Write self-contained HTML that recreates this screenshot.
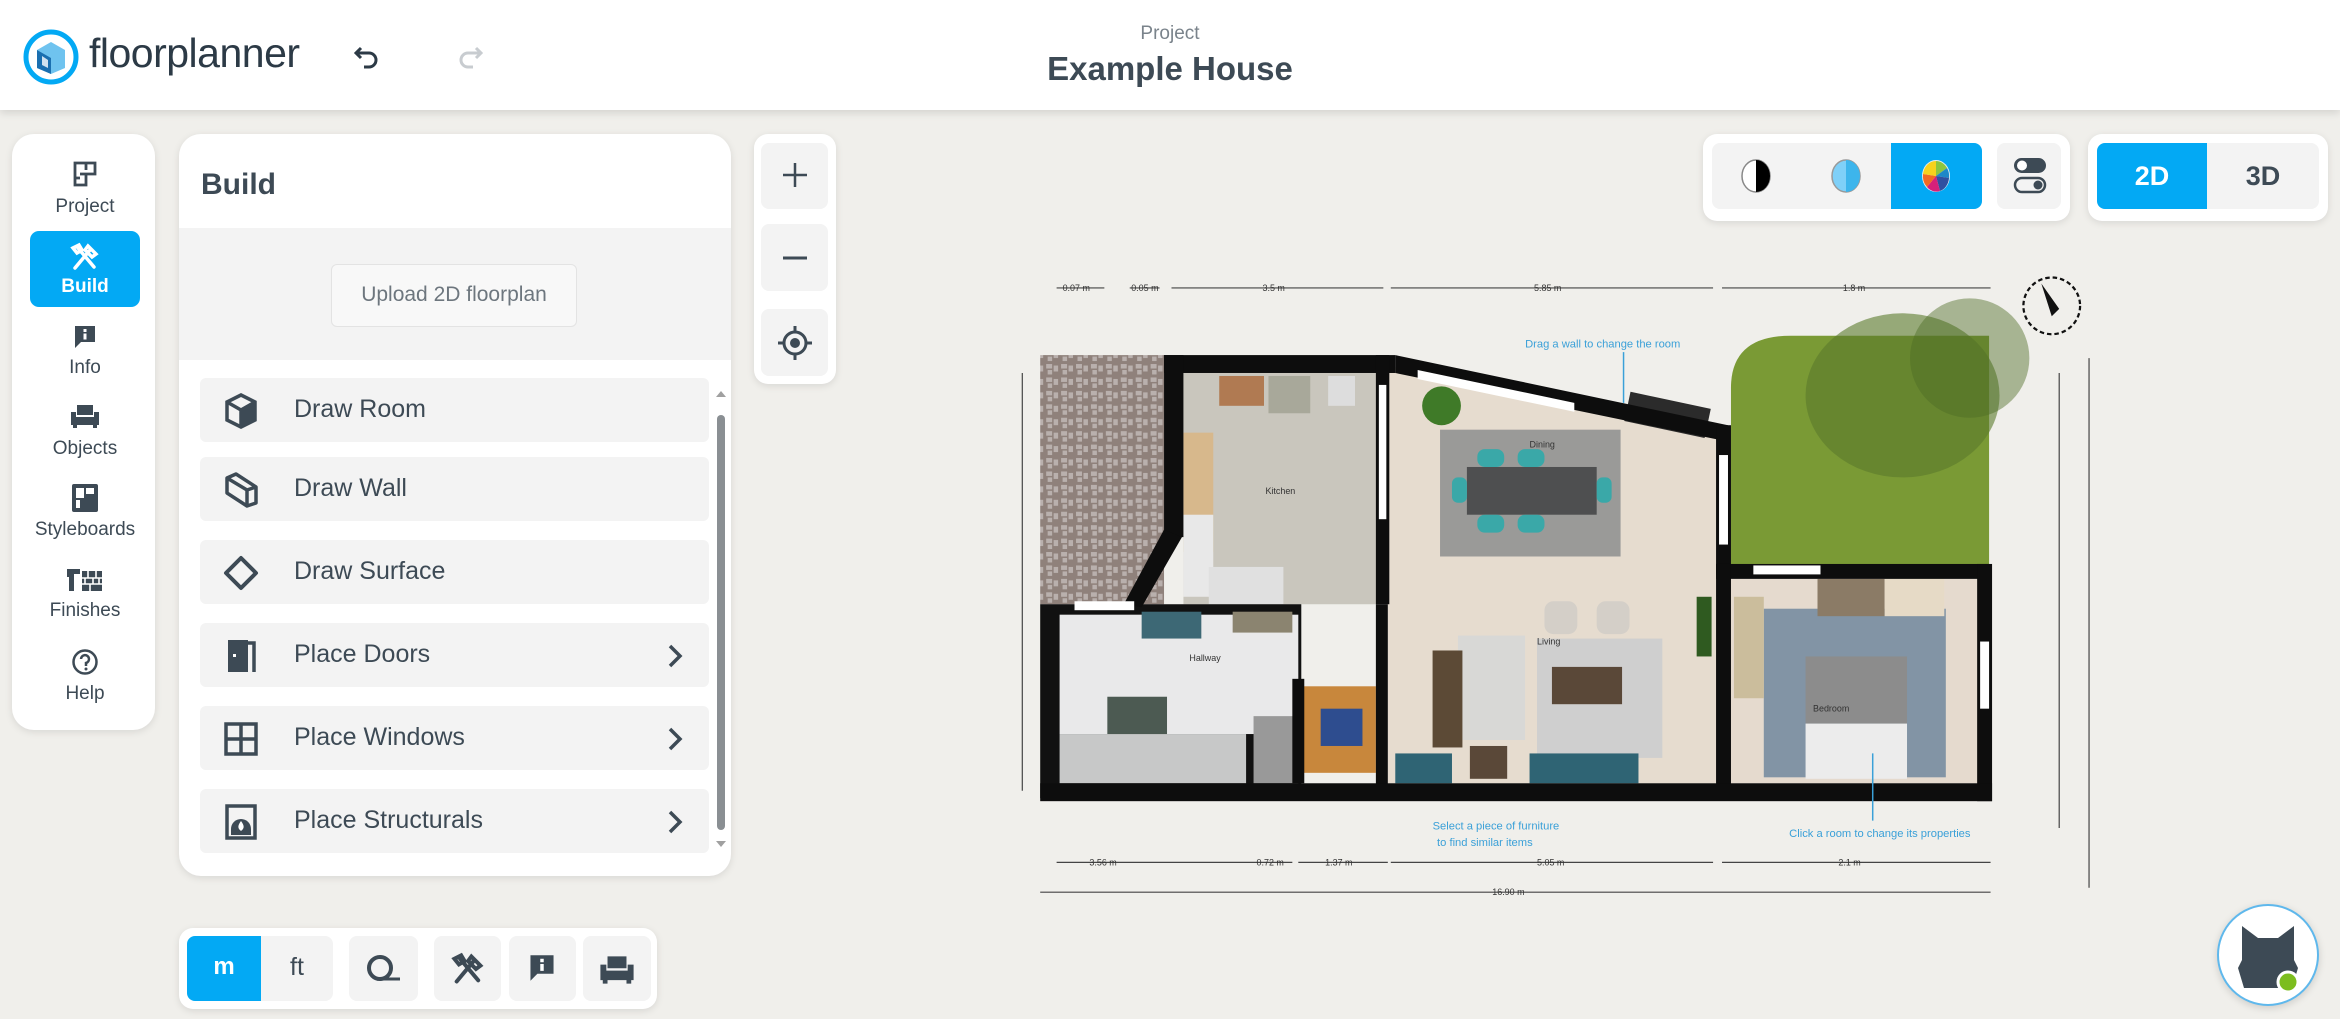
<!DOCTYPE html>
<html><head><meta charset="utf-8"><style>
*{box-sizing:border-box;margin:0;padding:0}
body{width:2340px;height:1019px;overflow:hidden;background:#f0efeb;font-family:"Liberation Sans",sans-serif;color:#3d4a55;position:relative}
.abs{position:absolute}
.header{left:0;top:0;width:2340px;height:110px;background:#fff;box-shadow:0 3px 8px rgba(0,0,0,.12)}
.card{background:#fff;border-radius:22px;box-shadow:0 2px 8px rgba(0,0,0,.1)}
.nav-item{position:absolute;left:30px;width:110px;text-align:center;font-size:19px}
.li{position:absolute;left:200px;width:509px;height:64px;background:#f3f3f3;border-radius:6px;font-size:25px}
.li span{position:absolute;left:94px;top:17px}
.li svg.ic{position:absolute;left:22px;top:14px}
.li .chev{position:absolute;right:26px;top:20px}
.btn{position:absolute;background:#f3f3f3;border-radius:8px}
.blue{background:#03a9f4}
</style></head><body>

<div class="abs header">
  <svg class="abs" style="left:22px;top:28px" width="58" height="58" viewBox="0 0 58 58">
    <circle cx="29" cy="29" r="25" fill="#fff" stroke="#03a9f4" stroke-width="5"/>
    <path d="M15 22 L29 14 L43 22 L43 40 L29 46 L15 40Z" fill="#6fc3ef"/>
    <path d="M15 22 L29 30 L29 46 L15 40Z" fill="#1a6fb0"/>
    <path d="M20 28 L26 32 L26 40 L20 37Z" fill="#fff" opacity=".8"/>
  </svg>
  <div class="abs" style="left:89px;top:30px;font-size:41px;color:#2c3a46;letter-spacing:-0.5px">floorplanner</div>
  <svg class="abs" style="left:352px;top:42px" width="30" height="30" viewBox="0 0 30 30"><path d="M9 6 L4 11 L9 16 M4 11 H17 a7 7 0 0 1 0 14 H12" fill="none" stroke="#2c3a46" stroke-width="3"/></svg>
  <svg class="abs" style="left:455px;top:42px" width="30" height="30" viewBox="0 0 30 30"><path d="M21 6 L26 11 L21 16 M26 11 H13 a7 7 0 0 0 0 14 H18" fill="none" stroke="#c8ccd0" stroke-width="3"/></svg>
  <div class="abs" style="left:1070px;width:200px;text-align:center;top:23px;font-size:19px;color:#7a838b">Project</div>
  <div class="abs" style="left:970px;width:400px;text-align:center;top:50px;font-size:33px;font-weight:bold;color:#3d4a55">Example House</div>
</div>

<!-- left nav -->
<div class="abs card" style="left:12px;top:134px;width:143px;height:596px"></div>
<div class="abs blue" style="left:30px;top:231px;width:110px;height:76px;border-radius:9px"></div>
<svg class="abs" style="left:72px;top:160px" width="26" height="28" viewBox="0 0 26 28"><path d="M3 3H23V14H14V25H3Z M14 3V10 M8 14H14 M3 18H8" fill="none" stroke="#3d4a55" stroke-width="2.8"/></svg>
<div class="nav-item" style="top:196px">Project</div>
<svg class="abs" style="left:70px;top:242px" width="30" height="30" viewBox="0 0 30 30"><path d="M5 26 L20 8 M8 6 L24 25 M18 4 L26 12 L22 15 L15 8Z M3 6 L9 3 L12 8 L7 11Z" fill="none" stroke="#fff" stroke-width="3.5" stroke-linecap="round"/></svg>
<div class="nav-item" style="top:276px;color:#fff;font-weight:bold">Build</div>
<svg class="abs" style="left:73px;top:324px" width="24" height="26" viewBox="0 0 24 26"><path d="M2 2H22V18H8L2 24Z" fill="#3d4a55"/><rect x="10.5" y="5" width="3" height="3" fill="#fff"/><rect x="10.5" y="9.5" width="3" height="6" fill="#fff"/></svg>
<div class="nav-item" style="top:357px">Info</div>
<svg class="abs" style="left:70px;top:403px" width="30" height="27" viewBox="0 0 30 27"><path d="M7 2H23V12H7Z M1 9H6V22H1Z M24 9H29V22H24Z M6 14H24V22H6Z M3 22H7V25H3Z M23 22H27V25H23Z" fill="#3d4a55"/></svg>
<div class="nav-item" style="top:438px">Objects</div>
<svg class="abs" style="left:71px;top:483px" width="28" height="30" viewBox="0 0 28 30"><rect x="1" y="1" width="26" height="28" rx="2" fill="#3d4a55"/><rect x="5" y="5" width="8" height="10" fill="#fff"/><rect x="15" y="5" width="8" height="6" fill="#fff"/><rect x="5" y="17" width="4" height="8" fill="#fff"/></svg>
<div class="nav-item" style="top:519px">Styleboards</div>
<svg class="abs" style="left:66px;top:567px" width="38" height="26" viewBox="0 0 38 26"><path d="M1 2H14V7H8V24H3V10H1Z" fill="#3d4a55"/><rect x="16" y="4" width="20" height="20" fill="#3d4a55"/><path d="M16 11H36 M16 17H36 M22 4V11 M30 4V11 M19 11V17 M27 11V17 M33 11V17 M24 17V24" stroke="#fff" stroke-width="1.6"/></svg>
<div class="nav-item" style="top:600px">Finishes</div>
<svg class="abs" style="left:71px;top:648px" width="28" height="28" viewBox="0 0 28 28"><circle cx="14" cy="14" r="11.5" fill="none" stroke="#3d4a55" stroke-width="2.5"/><path d="M10 11 a4 4 0 1 1 5 4 v3" fill="none" stroke="#3d4a55" stroke-width="2.5"/><circle cx="15" cy="21" r="1.5" fill="#3d4a55"/></svg>
<div class="nav-item" style="top:683px">Help</div>

<!-- build panel -->
<div class="abs card" style="left:179px;top:134px;width:552px;height:742px;overflow:hidden">
  <div class="abs" style="left:0;top:94px;width:552px;height:132px;background:#f3f3f3"></div>
</div>
<div class="abs" style="left:201px;top:168px;font-size:30px;font-weight:bold">Build</div>
<div class="abs" style="left:331px;top:264px;width:246px;height:63px;background:#f8f8f8;border:1.5px solid #e3e3e3;border-radius:6px;font-size:21px;color:#6d767e;text-align:center;line-height:60px">Upload 2D floorplan</div>

<div class="li" style="top:378px"><svg class="ic" width="38" height="38" viewBox="0 0 38 38"><path d="M19 3 L33 10 L33 28 L19 35 L5 28 L5 10Z" fill="none" stroke="#3d4a55" stroke-width="3.5"/><path d="M5 10 L19 18 L33 10 M19 18 V35" fill="none" stroke="#3d4a55" stroke-width="3.5"/><path d="M19 18 L33 10 L33 28 L19 35Z" fill="#3d4a55"/></svg><span>Draw Room</span></div>
<div class="li" style="top:457px"><svg class="ic" width="38" height="38" viewBox="0 0 38 38"><path d="M5 7 L14 3 L34 16 L34 32 L25 35 L5 22Z M5 7 L25 19 L34 16 M25 19 V35" fill="none" stroke="#3d4a55" stroke-width="3.5" stroke-linejoin="round"/></svg><span>Draw Wall</span></div>
<div class="li" style="top:540px"><svg class="ic" width="38" height="38" viewBox="0 0 38 38"><path d="M19 4 L34 19 L19 34 L4 19Z" fill="none" stroke="#3d4a55" stroke-width="4" stroke-linejoin="round"/></svg><span>Draw Surface</span></div>
<div class="li" style="top:623px"><svg class="ic" width="38" height="38" viewBox="0 0 38 38"><path d="M6 3H26V35H6Z" fill="#3d4a55"/><path d="M26 6H32V35" fill="none" stroke="#3d4a55" stroke-width="3.5"/><rect x="11" y="17" width="3" height="3" fill="#fff"/></svg><span>Place Doors</span><svg class="chev" width="16" height="26" viewBox="0 0 16 26"><path d="M3 3 L13 13 L3 23" fill="none" stroke="#3d4a55" stroke-width="3.5"/></svg></div>
<div class="li" style="top:706px"><svg class="ic" width="38" height="38" viewBox="0 0 38 38"><rect x="4" y="4" width="30" height="30" fill="none" stroke="#3d4a55" stroke-width="3.5"/><path d="M19 4V34 M4 19H34" stroke="#3d4a55" stroke-width="3.5"/></svg><span>Place Windows</span><svg class="chev" width="16" height="26" viewBox="0 0 16 26"><path d="M3 3 L13 13 L3 23" fill="none" stroke="#3d4a55" stroke-width="3.5"/></svg></div>
<div class="li" style="top:789px"><svg class="ic" width="38" height="38" viewBox="0 0 38 38"><rect x="5" y="3" width="28" height="32" fill="none" stroke="#3d4a55" stroke-width="3.5"/><path d="M9 32 V26 a10 10 0 0 1 20 0 V32Z" fill="#3d4a55"/><path d="M19 18 c-3 4 -4 7 0 10 c4 -3 3 -6 0 -10z" fill="#fff"/></svg><span>Place Structurals</span><svg class="chev" width="16" height="26" viewBox="0 0 16 26"><path d="M3 3 L13 13 L3 23" fill="none" stroke="#3d4a55" stroke-width="3.5"/></svg></div>
<div class="abs" style="left:717px;top:415px;width:8px;height:415px;background:#8a8f93;border-radius:4px"></div>
<svg class="abs" style="left:715px;top:390px" width="12" height="8"><path d="M1 7 L6 1 L11 7Z" fill="#a0a0a0"/></svg>
<svg class="abs" style="left:715px;top:840px" width="12" height="8"><path d="M1 1 L6 7 L11 1Z" fill="#a0a0a0"/></svg>

<!-- zoom controls -->
<div class="abs card" style="left:754px;top:134px;width:82px;height:250px;border-radius:14px"></div>
<div class="btn" style="left:761px;top:143px;width:67px;height:66px"></div>
<div class="btn" style="left:761px;top:224px;width:67px;height:67px"></div>
<div class="btn" style="left:761px;top:309px;width:67px;height:67px"></div>
<svg class="abs" style="left:780px;top:160px" width="30" height="30"><path d="M15 3V27 M3 15H27" stroke="#3d4a55" stroke-width="2.5"/></svg>
<svg class="abs" style="left:780px;top:243px" width="30" height="30"><path d="M3 15H27" stroke="#3d4a55" stroke-width="3"/></svg>
<svg class="abs" style="left:777px;top:324px" width="36" height="38" viewBox="0 0 36 38"><circle cx="18" cy="19" r="11" fill="none" stroke="#3d4a55" stroke-width="3"/><circle cx="18" cy="19" r="5" fill="#3d4a55"/><path d="M18 2V8 M18 30V36 M1 19H7 M29 19H35" stroke="#3d4a55" stroke-width="3"/></svg>

<!-- bottom toolbar -->
<div class="abs card" style="left:179px;top:928px;width:478px;height:81px;border-radius:14px"></div>
<div class="abs blue" style="left:187px;top:936px;width:74px;height:65px;border-radius:8px 0 0 8px;color:#fff;font-weight:bold;font-size:24px;text-align:center;line-height:62px">m</div>
<div class="btn" style="left:261px;top:936px;width:72px;height:65px;border-radius:0 8px 8px 0;font-size:25px;text-align:center;line-height:62px">ft</div>
<div class="btn" style="left:349px;top:936px;width:69px;height:65px"></div>
<svg class="abs" style="left:366px;top:953px" width="36" height="32" viewBox="0 0 36 32"><circle cx="14" cy="15" r="11" fill="none" stroke="#3d4a55" stroke-width="4"/><path d="M14 26 H34" stroke="#3d4a55" stroke-width="3"/></svg>
<div class="btn" style="left:434px;top:936px;width:67px;height:65px"></div>
<svg class="abs" style="left:451px;top:952px" width="34" height="34" viewBox="0 0 30 30"><path d="M5 26 L20 8 M8 6 L24 25 M18 4 L26 12 L22 15 L15 8Z M3 6 L9 3 L12 8 L7 11Z" fill="none" stroke="#3d4a55" stroke-width="3.5" stroke-linecap="round"/></svg>
<div class="btn" style="left:509px;top:936px;width:67px;height:65px"></div>
<svg class="abs" style="left:527px;top:953px" width="30" height="30" viewBox="0 0 24 26"><path d="M2 2H22V18H8L2 24Z" fill="#3d4a55"/><rect x="10.5" y="5" width="3" height="3" fill="#fff"/><rect x="10.5" y="9.5" width="3" height="6" fill="#fff"/></svg>
<div class="btn" style="left:583px;top:936px;width:68px;height:65px"></div>
<svg class="abs" style="left:598px;top:954px" width="38" height="32" viewBox="0 0 30 27"><path d="M7 2H23V12H7Z M1 9H6V22H1Z M24 9H29V22H24Z M6 14H24V22H6Z M3 22H7V25H3Z M23 22H27V25H23Z" fill="#3d4a55"/></svg>

<!-- top right view controls -->
<div class="abs card" style="left:1703px;top:134px;width:367px;height:87px;border-radius:14px"></div>
<div class="btn" style="left:1712px;top:143px;width:270px;height:66px"></div>
<div class="abs blue" style="left:1891px;top:143px;width:91px;height:66px;border-radius:0 8px 8px 0"></div>
<div class="btn" style="left:1997px;top:143px;width:64px;height:66px"></div>
<svg class="abs" style="left:1736px;top:156px" width="40" height="40"><ellipse cx="20" cy="20" rx="14" ry="16" fill="#fff" stroke="#888" stroke-width="1.5"/><path d="M20 4 a14 16 0 0 1 0 32Z" fill="#000"/></svg>
<svg class="abs" style="left:1826px;top:156px" width="40" height="40"><ellipse cx="20" cy="20" rx="14" ry="16" fill="#7fd0f8" stroke="#999" stroke-width="1.5"/><path d="M20 4 a14 16 0 0 1 0 32Z" fill="#3db5ec"/></svg>
<svg class="abs" style="left:1916px;top:156px" width="40" height="40" viewBox="0 0 40 40"><ellipse cx="20" cy="20" rx="14" ry="16" fill="#e6ecf0"/>
<path d="M20 20 L20 5 A13 15 0 0 1 31 12Z" fill="#8cc63f"/><path d="M20 20 L31 12 A13 15 0 0 1 33 22Z" fill="#1e88c8"/><path d="M20 20 L33 22 A13 15 0 0 1 24 35Z" fill="#3050a0"/><path d="M20 20 L24 35 A13 15 0 0 1 11 31Z" fill="#d6207a"/><path d="M20 20 L11 31 A13 15 0 0 1 7 18Z" fill="#f26a22"/><path d="M20 20 L7 18 A13 15 0 0 1 20 5Z" fill="#f7d21c"/></svg>
<svg class="abs" style="left:2012px;top:156px" width="36" height="40" viewBox="0 0 36 40"><rect x="2" y="2" width="32" height="15" rx="7.5" fill="#3d4a55"/><circle cx="10" cy="9.5" r="5" fill="#fff"/><rect x="3" y="22" width="30" height="14" rx="7" fill="none" stroke="#3d4a55" stroke-width="2.5"/><circle cx="26" cy="29" r="4.5" fill="#3d4a55"/></svg>
<div class="abs card" style="left:2088px;top:134px;width:240px;height:87px;border-radius:14px"></div>
<div class="abs blue" style="left:2097px;top:143px;width:110px;height:66px;border-radius:8px 0 0 8px;color:#fff;font-weight:bold;font-size:27px;text-align:center;line-height:66px">2D</div>
<div class="btn" style="left:2207px;top:143px;width:112px;height:66px;border-radius:0 8px 8px 0;font-weight:bold;font-size:27px;text-align:center;line-height:66px">3D</div>

<!-- floorplan -->
<svg class="abs" style="left:0;top:0" width="2340" height="1019" viewBox="0 0 1568 683">
<defs><pattern id="grav" width="10" height="9" patternUnits="userSpaceOnUse"><rect width="10" height="9" fill="#8f817b"/><path d="M1 1h4v3h-4z M6 2h3v4h-3z M2 5h3v3h-3z" fill="#b9b0ad"/></pattern></defs>
<g font-family="Liberation Sans" font-size="6" fill="#333">
<g stroke="#444" stroke-width=".8">
<path d="M708 193H740 M757 193H777 M785 193H927 M932 193H1148 M1154 193H1334"/>
<path d="M708 578H866 M870 578H930 M932 578H1148 M1154 578H1334 M697 598H1334"/>
<path d="M685 250V530 M1380 250V555 M1400 240V595"/>
</g>
<text x="712" y="195">0.07 m</text><text x="758" y="195">0.05 m</text><text x="846" y="195">3.5 m</text><text x="1028" y="195">5.85 m</text><text x="1235" y="195">1.8 m</text>
<text x="730" y="580">3.56 m</text><text x="842" y="580">0.72 m</text><text x="888" y="580">1.37 m</text><text x="1030" y="580">5.05 m</text><text x="1232" y="580">2.1 m</text><text x="1000" y="600">16.90 m</text>
<circle cx="1375" cy="205" r="19" fill="none" stroke="#111" stroke-width="1.5" stroke-dasharray="3 2"/>
<path d="M1368 190 L1380 207 L1375 212Z" fill="#111"/>
<rect x="697" y="238" width="83" height="167" fill="url(#grav)"/>
<path d="M1160 378 V260 Q1160 225 1200 225 H1333 V378Z" fill="#7a9a35"/>
<ellipse cx="1275" cy="265" rx="65" ry="55" fill="#5a7a2c" opacity=".6"/>
<ellipse cx="1320" cy="240" rx="40" ry="40" fill="#4e6d25" opacity=".45"/>
<path d="M930 245 L1150 290 V525 H930Z" fill="#e6dccf"/>
<rect x="793" y="250" width="130" height="155" fill="#c9c6bd"/>
<rect x="817" y="252" width="30" height="20" fill="#b07a52"/><rect x="850" y="252" width="28" height="25" fill="#a8a89a"/><rect x="890" y="252" width="18" height="20" fill="#ddd"/>
<rect x="793" y="290" width="20" height="80" fill="#d7b88c"/><rect x="793" y="345" width="20" height="55" fill="#e8e8e8"/><rect x="810" y="380" width="50" height="25" fill="#e0e0e0"/>
<rect x="697" y="405" width="175" height="130" fill="#111"/>
<rect x="710" y="412" width="160" height="80" fill="#e9e9ea"/>
<rect x="710" y="492" width="125" height="33" fill="#c7c8c8"/>
<rect x="765" y="410" width="40" height="18" fill="#3d6875"/><rect x="826" y="410" width="40" height="14" fill="#8b8470"/>
<rect x="742" y="467" width="40" height="25" fill="#4c5a52"/>
<rect x="840" y="480" width="30" height="45" fill="#999"/>
<rect x="872" y="460" width="50" height="58" fill="#c8873c"/><rect x="885" y="475" width="28" height="25" fill="#2e4d8f"/>
<rect x="1160" y="388" width="166" height="137" fill="#e5dace"/>
<rect x="1182" y="408" width="122" height="113" fill="#8294a5"/>
<rect x="1210" y="440" width="68" height="45" fill="#8c8c8c"/><rect x="1210" y="485" width="68" height="37" fill="#ececec"/>
<rect x="1162" y="400" width="20" height="68" fill="#cbbd9c"/>
<rect x="1218" y="388" width="45" height="25" fill="#8b7b66"/><rect x="1263" y="388" width="40" height="25" fill="#e6dac6"/>
<rect x="965" y="288" width="121" height="85" fill="#9a9a98"/>
<rect x="983" y="313" width="87" height="32" fill="#4e4f50"/>
<g fill="#3aa8a8"><rect x="990" y="301" width="18" height="12" rx="5"/><rect x="1017" y="301" width="18" height="12" rx="5"/><rect x="990" y="345" width="18" height="12" rx="5"/><rect x="1017" y="345" width="18" height="12" rx="5"/><rect x="973" y="320" width="10" height="17" rx="4"/><rect x="1070" y="320" width="10" height="17" rx="4"/></g>
<circle cx="966" cy="272" r="13" fill="#3f7a28"/>
<rect x="1090" y="268" width="55" height="20" fill="#2b2b2b" transform="rotate(12 1117 278)"/>
<rect x="1030" y="428" width="84" height="80" fill="#cfcfcf"/>
<rect x="977" y="426" width="45" height="70" fill="#d8d8d6"/>
<rect x="1040" y="447" width="47" height="25" fill="#5a4838"/>
<rect x="960" y="436" width="20" height="65" fill="#5c4a36"/>
<rect x="1035" y="403" width="22" height="22" rx="6" fill="#d4cfc8"/><rect x="1070" y="403" width="22" height="22" rx="6" fill="#d4cfc8"/>
<rect x="935" y="505" width="38" height="20" fill="#2f6474"/><rect x="1025" y="505" width="73" height="20" fill="#2f6474"/><rect x="985" y="500" width="25" height="22" fill="#5a4838"/>
<rect x="1137" y="400" width="10" height="40" fill="#2f5a20"/>
<g fill="#0d0d0d">
<rect x="780" y="238" width="155" height="12"/>
<rect x="780" y="238" width="13" height="122"/>
<path d="M780 355 L792 360 L765 407 L753 405Z"/>
<rect x="922" y="238" width="9" height="167"/>
<path d="M935 238 L1158 285 L1158 296 L935 250Z"/>
<rect x="1150" y="285" width="10" height="100"/>
<rect x="1150" y="378" width="183" height="10"/>
<rect x="1325" y="378" width="10" height="159"/>
<rect x="1150" y="378" width="10" height="150"/>
<rect x="922" y="405" width="8" height="125"/>
<rect x="697" y="525" width="638" height="12"/>
<rect x="866" y="455" width="8" height="70"/>
</g>
<path d="M950 248 L1055 270 L1055 276 L950 254Z" fill="#fff"/>
<rect x="1152" y="305" width="6" height="60" fill="#fff"/><rect x="1175" y="379" width="45" height="6" fill="#fff"/>
<rect x="924" y="258" width="5" height="90" fill="#fff"/>
<rect x="1327" y="430" width="6" height="45" fill="#fff"/>
<rect x="720" y="403" width="40" height="6" fill="#fff"/>
<g fill="#333" font-size="6"><text x="848" y="331">Kitchen</text><text x="1025" y="300">Dining</text><text x="1030" y="432">Living</text><text x="797" y="443">Hallway</text><text x="1215" y="477">Bedroom</text></g>
<g fill="#3aa0d8" font-size="7.5"><text x="1022" y="233">Drag a wall to change the room</text><text x="960" y="556">Select a piece of furniture</text><text x="963" y="567">to find similar items</text><text x="1199" y="561">Click a room to change its properties</text></g>
<path d="M1088 236V270 M1255 505V550" stroke="#3aa0d8" stroke-width="1"/>
</g>
</svg>

<div class="abs" style="left:2217px;top:904px;width:102px;height:102px;border-radius:50%;background:#fff;border:2px solid #5fb8ec;box-shadow:0 2px 8px rgba(0,0,0,.15)"></div>
<svg class="abs" style="left:2232px;top:918px" width="72" height="76" viewBox="0 0 72 76"><path d="M10 8 L26 20 H46 L62 8 L62 42 L66 50 L60 70 H12 L6 50 L10 42Z" fill="#3d4a55"/><circle cx="56" cy="64" r="10" fill="#7cbd1e" stroke="#fff" stroke-width="3"/></svg>

</body></html>
